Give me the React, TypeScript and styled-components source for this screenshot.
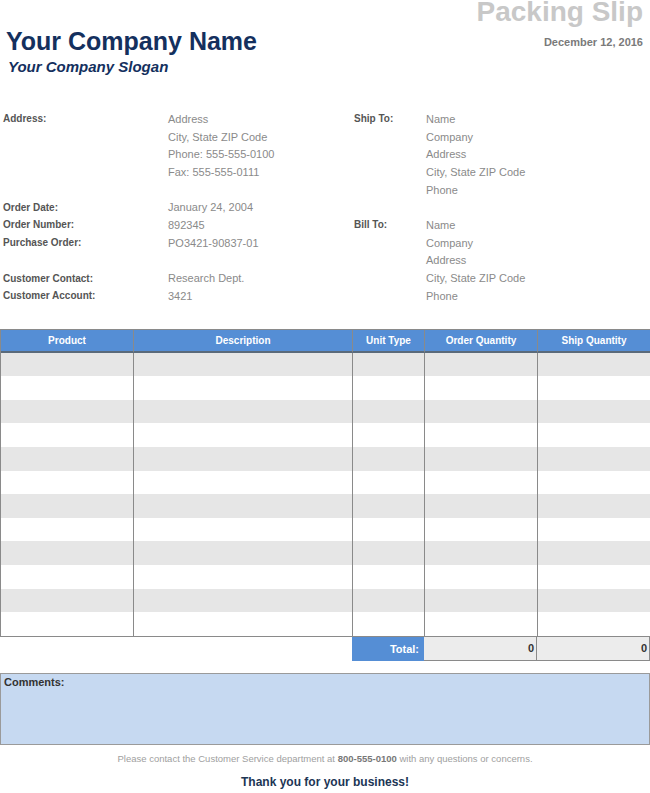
import styled, { createGlobalStyle } from 'styled-components';

const Global = createGlobalStyle`
  body { margin: 0; font-family: "Liberation Sans", Arial, sans-serif; background: #fff; }
`;

const Page = styled.div`
  width: 650px;
  height: 793px;
  overflow: hidden;
  position: relative;
`;

const Top = styled.div`
  display: flex;
  justify-content: space-between;
  padding: 0 7px 0 6px;
`;

const Brand = styled.div`
  padding-top: 26px;
`;

const CompanyName = styled.div`
  font-size: 25px;
  font-weight: bold;
  color: #14305e;
  line-height: 30px;
`;

const Slogan = styled.div`
  font-size: 15px;
  font-style: italic;
  font-weight: bold;
  color: #14305e;
  margin-top: 2px;
  padding-left: 2px;
`;

const Right = styled.div`
  text-align: right;
`;

const Title = styled.div`
  font-size: 28px;
  font-weight: bold;
  color: #c8c8c8;
  line-height: 28px;
  margin-top: -2px;
`;

const DateText = styled.div`
  font-size: 11px;
  font-weight: bold;
  color: #7a7a7a;
  margin-top: 10px;
`;

const Info = styled.div`
  display: grid;
  grid-template-columns: 165px 186px 72px 1fr;
  grid-auto-rows: 17.7px;
  margin-top: 35px;
  padding-left: 3px;
  font-size: 11px;
  align-items: center;
`;

const Label = styled.div<{ $row: number; $col: number }>`
  grid-row: ${p => p.$row};
  grid-column: ${p => p.$col};
  font-size: 10px;
  font-weight: bold;
  color: #555;
`;

const Value = styled.div<{ $row: number; $col: number }>`
  grid-row: ${p => p.$row};
  grid-column: ${p => p.$col};
  color: #8a8a8a;
`;

const Table = styled.div`
  margin-top: 24px;
  display: grid;
  grid-template-columns: 133px 219px 72px 113px 113px;
  border-left: 1px solid #8a8a8a;
  width: 649px;
`;

const Head = styled.div`
  background: #558ed5;
  color: #fff;
  font-size: 10px;
  font-weight: bold;
  height: 21px;
  display: flex;
  align-items: center;
  justify-content: center;
  border-top: 1px solid #8a8a8a;
  border-bottom: 2px solid #5a6a7a;
  border-right: 1px solid #8a8a8a;
`;

const Cell = styled.div<{ $shade: boolean; $last: boolean }>`
  height: 23.6px;
  background: ${p => (p.$shade ? '#e6e6e6' : '#fff')};
  border-right: 1px solid #8a8a8a;
  border-bottom: ${p => (p.$last ? '1px solid #8a8a8a' : 'none')};
`;

const TotalRow = styled.div`
  display: grid;
  grid-template-columns: 352px 72px 113px 113px;
  height: 24px;
`;

const TotalLabel = styled.div`
  grid-column: 2;
  background: #558ed5;
  color: #fff;
  font-size: 11px;
  font-weight: bold;
  display: flex;
  align-items: center;
  justify-content: flex-end;
  padding-right: 5px;
`;

const TotalValue = styled.div`
  background: #ececec;
  border-right: 1px solid #8a8a8a;
  border-bottom: 1px solid #8a8a8a;
  font-size: 11px;
  font-weight: bold;
  color: #333;
  display: flex;
  align-items: center;
  justify-content: flex-end;
  padding-right: 2px;
`;

const Comments = styled.div`
  margin-top: 12px;
  height: 72px;
  background: #c6d9f1;
  border: 1px solid #9a9a9a;
  font-size: 11px;
  font-weight: bold;
  color: #333;
  padding: 2px 3px;
  box-sizing: border-box;
`;

const Contact = styled.div`
  margin-top: 8px;
  text-align: center;
  font-size: 9.5px;
  color: #a0a0a0;
  b { color: #777; }
`;

const Thanks = styled.div`
  margin-top: 11px;
  text-align: center;
  font-size: 12px;
  font-weight: bold;
  color: #203554;
`;

const leftRows: [number, string, string[]][] = [
  [1, 'Address:', ['Address', 'City, State ZIP Code', 'Phone: 555-555-0100', 'Fax: 555-555-0111']],
  [6, 'Order Date:', ['January 24, 2004']],
  [7, 'Order Number:', ['892345']],
  [8, 'Purchase Order:', ['PO3421-90837-01']],
  [10, 'Customer Contact:', ['Research Dept.']],
  [11, 'Customer Account:', ['3421']],
];

const rightRows: [number, string, string[]][] = [
  [1, 'Ship To:', ['Name', 'Company', 'Address', 'City, State ZIP Code', 'Phone']],
  [7, 'Bill To:', ['Name', 'Company', 'Address', 'City, State ZIP Code', 'Phone']],
];

const headers = ['Product', 'Description', 'Unit Type', 'Order Quantity', 'Ship Quantity'];

export default function App() {
  return (
    <Page>
      <Global />
      <Top>
        <Brand>
          <CompanyName>Your Company Name</CompanyName>
          <Slogan>Your Company Slogan</Slogan>
        </Brand>
        <Right>
          <Title>Packing Slip</Title>
          <DateText>December 12, 2016</DateText>
        </Right>
      </Top>
      <Info>
        {leftRows.map(([r, l, vs]) => [
          <Label key={l} $row={r} $col={1}>{l}</Label>,
          ...vs.map((v, i) => <Value key={l + i} $row={r + i} $col={2}>{v}</Value>),
        ])}
        {rightRows.map(([r, l, vs]) => [
          <Label key={l} $row={r} $col={3}>{l}</Label>,
          ...vs.map((v, i) => <Value key={l + i} $row={r + i} $col={4}>{v}</Value>),
        ])}
      </Info>
      <Table>
        {headers.map(h => <Head key={h}>{h}</Head>)}
        {Array.from({ length: 12 }).flatMap((_, r) =>
          headers.map(h => <Cell key={h + r} $shade={r % 2 === 0} $last={r === 11} />)
        )}
      </Table>
      <TotalRow>
        <TotalLabel>Total:</TotalLabel>
        <TotalValue>0</TotalValue>
        <TotalValue>0</TotalValue>
      </TotalRow>
      <Comments>Comments:</Comments>
      <Contact>
        Please contact the Customer Service department at <b>800-555-0100</b> with any questions or concerns.
      </Contact>
      <Thanks>Thank you for your business!</Thanks>
    </Page>
  );
}
